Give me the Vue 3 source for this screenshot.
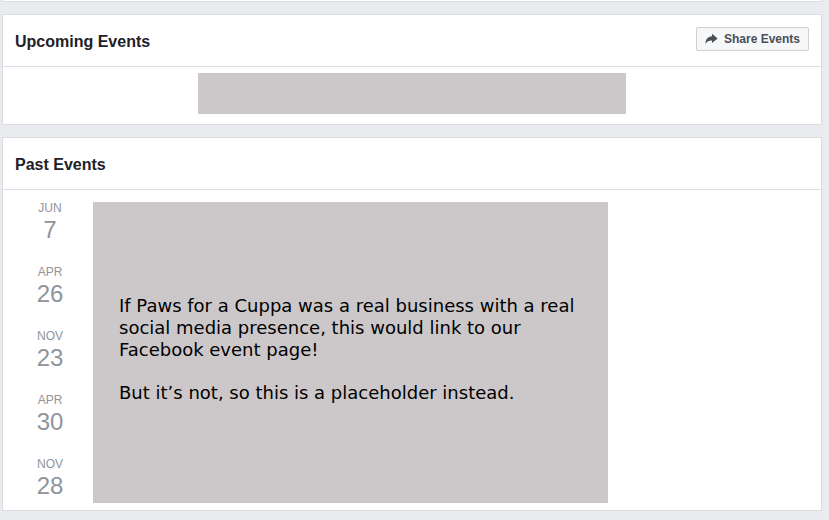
<script setup>
const pastEvents = [
  { month: 'JUN', day: 7 },
  { month: 'APR', day: 26 },
  { month: 'NOV', day: 23 },
  { month: 'APR', day: 30 },
  { month: 'NOV', day: 28 },
]
</script>

<template>
  <main class="page">
    <div class="card card-end"></div>

    <section class="card" aria-labelledby="upcoming">
      <header class="card-header">
        <h2 id="upcoming">Upcoming Events</h2>
        <button type="button" class="share">
          <svg width="13" height="12" viewBox="0 0 13 12" aria-hidden="true">
            <path d="M7 0.8 L12.6 5.4 L7 10 V7.5 C4.2 7.4 2.2 8.2 0.5 11 C0.6 6.2 2.8 3.4 7 3.2 Z" fill="#4b4f56" />
          </svg>
          <span>Share Events</span>
        </button>
      </header>
      <div class="upcoming-body">
        <div class="upcoming-block"></div>
      </div>
    </section>

    <section class="card" aria-labelledby="past">
      <header class="card-header">
        <h2 id="past">Past Events</h2>
      </header>
      <div class="past-body">
        <ul class="dates">
          <li v-for="(event, i) in pastEvents" :key="i">
            <span class="month">{{ event.month }}</span>
            <span class="day">{{ event.day }}</span>
          </li>
        </ul>
        <div class="notice">
          <p>If Paws for a Cuppa was a real business with a real social media presence, this would link to our Facebook event page!</p>
          <p>But it’s not, so this is a placeholder instead.</p>
        </div>
      </div>
    </section>
  </main>
</template>

<style>
body {
  background: #e9ebee;
}
</style>

<style scoped>
.page {
  display: flex;
  flex-direction: column;
  gap: 12px;
  padding: 0 7px 9px 2px;
  font-family: "Liberation Sans", Arial, sans-serif;
}
.card {
  background: #fff;
  border: 1px solid #dadce2;
}
.card-end {
  height: 1px;
  border-top: 0;
}
.card-header {
  display: flex;
  align-items: flex-start;
  justify-content: space-between;
  height: 39px;
  padding: 12px 12px 0;
  border-bottom: 1px solid #dadce2;
}
h2 {
  margin: 0;
  font-size: 16px;
  line-height: 30px;
  color: #1d2129;
}
.share {
  display: flex;
  align-items: center;
  gap: 6px;
  height: 24px;
  padding: 0 8px;
  border: 1px solid #ced0d4;
  border-radius: 2px;
  background: #f6f7f9;
  color: #4b4f56;
  font: bold 12px/22px "Liberation Sans", Arial, sans-serif;
  white-space: nowrap;
}
.upcoming-body {
  padding: 6px 12px 10px;
}
.upcoming-block {
  width: 54%;
  height: 41px;
  margin: 0 auto;
  background: #ccc8c9;
}
.past-body {
  display: flex;
  padding: 12px 12px 7px;
}
.dates {
  display: flex;
  flex-direction: column;
  gap: 20px;
  flex: 0 0 70px;
  margin: 0 8px 0 0;
  padding: 0;
  list-style: none;
  color: #90949c;
  text-align: center;
}
.month,
.day {
  display: block;
}
.month {
  font-size: 12px;
  line-height: 12px;
}
.day {
  font-size: 24px;
  line-height: 32px;
}
.notice {
  display: flex;
  flex-direction: column;
  justify-content: center;
  gap: 21px;
  flex: 0 1 515px;
  box-sizing: border-box;
  min-height: 301px;
  padding: 0 20px 7px 26px;
  background: #ccc8c9;
  color: #000;
  font: 18px/22px "DejaVu Sans", Verdana, sans-serif;
}
.notice p {
  margin: 0;
}
</style>
